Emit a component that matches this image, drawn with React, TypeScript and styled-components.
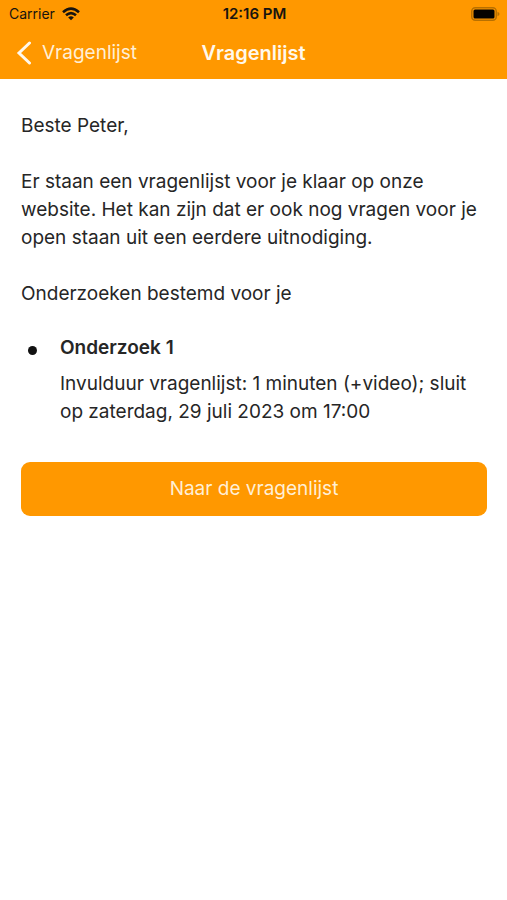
import React from "react";
import styled, { createGlobalStyle } from "styled-components";

const GlobalStyle = createGlobalStyle`
  * { box-sizing: border-box; }
  body { margin: 0; background: #fff; color: #262626; font-family: Inter, "Liberation Sans", sans-serif; }
`;
const Page = styled.div`min-height: 100vh; background: #fff;`;
const Top = styled.header`background: #ff9800;`;
const StatusBar = styled.div`
  display: grid; grid-template-columns: 1fr auto 1fr; align-items: center;
  height: 27px; padding: 0 7px 0 9px; color: #17140f; font-size: 14px; line-height: 20px;
`;
const Carrier = styled.div`display: flex; align-items: center; gap: 7px;`;
const Clock = styled.time`font-size: 15px; font-weight: 600;`;
const Battery = styled.svg`justify-self: end;`;
const NavBar = styled.nav`
  display: grid; grid-template-columns: 1fr auto 1fr; align-items: center;
  height: 52px; padding: 0 16px; color: #fff8ec;
`;
const Back = styled.a`
  display: flex; align-items: center; gap: 10px; color: #ffefd6;
  font-size: 19px; line-height: 28px; text-decoration: none;
`;
const Title = styled.h1`margin: 0; font-size: 20px; line-height: 28px; font-weight: 600;`;
const Content = styled.main`padding: 33px 20px 32px 21px; font-size: 19px; line-height: 28px;`;
const Paragraph = styled.p`margin: 0 0 28px;`;
const Intro = styled.p`margin: 0 0 26px;`;
const Studies = styled.ul`list-style: none; margin: 0 0 36px; padding: 0;`;
const Study = styled.li`display: flex; gap: 23px; padding-left: 7px;`;
const Dot = styled.span`flex: none; width: 9px; height: 9px; margin-top: 12px; border-radius: 50%; background: #111;`;
const StudyName = styled.h2`margin: 0 0 8px; font-size: 19px; line-height: 28px; font-weight: 600;`;
const Details = styled.p`margin: 0;`;
const Action = styled.button`
  display: block; width: 100%; height: 54px; border: 0; border-radius: 9px; background: #ff9800;
  color: #ffefd6; font: inherit; cursor: pointer;
`;

export default function App() {
  return (
    <Page>
      <GlobalStyle />
      <Top>
        <StatusBar>
          <Carrier>
            Carrier
            <svg width="18" height="14" viewBox="0 0 18 14" fill="none" stroke="currentColor" strokeWidth="2.6" aria-label="Wi-Fi">
              <path d="M1 5.2Q9-1.8 17 5.2M4 8.3Q9 4 14 8.3" />
              <path d="M9 13.2 6.2 10.4Q9 8.2 11.8 10.4Z" fill="currentColor" stroke="none" />
            </svg>
          </Carrier>
          <Clock>12:16 PM</Clock>
          <Battery width="29" height="14" viewBox="0 0 29 14" aria-label="Battery">
            <rect x=".75" y=".75" width="24.5" height="12.5" rx="3.5" fill="none" stroke="#b87000" strokeWidth="1.5" />
            <rect x="2.5" y="2.5" width="21" height="9" rx="1.5" fill="#050300" />
            <path d="M26.5 4.8Q28.5 5.5 28.5 7T26.5 9.2Z" fill="#b87000" />
          </Battery>
        </StatusBar>
        <NavBar>
          <Back href="#">
            <svg width="16" height="24" viewBox="0 0 16 24" fill="none" stroke="#fff8ec" strokeWidth="3" strokeLinecap="round" aria-hidden="true">
              <path d="M13.5 2 3 12l10.5 10" />
            </svg>
            Vragenlijst
          </Back>
          <Title>Vragenlijst</Title>
        </NavBar>
      </Top>
      <Content>
        <Paragraph>Beste Peter,</Paragraph>
        <Paragraph>
          Er staan een vragenlijst voor je klaar op onze website. Het kan zijn dat er ook nog vragen
          voor je open staan uit een eerdere uitnodiging.
        </Paragraph>
        <Intro>Onderzoeken bestemd voor je</Intro>
        <Studies>
          <Study>
            <Dot />
            <div>
              <StudyName>Onderzoek 1</StudyName>
              <Details>Invulduur vragenlijst: 1 minuten (+video); sluit op zaterdag, 29 juli 2023 om 17:00</Details>
            </div>
          </Study>
        </Studies>
        <Action type="button">Naar de vragenlijst</Action>
      </Content>
    </Page>
  );
}
